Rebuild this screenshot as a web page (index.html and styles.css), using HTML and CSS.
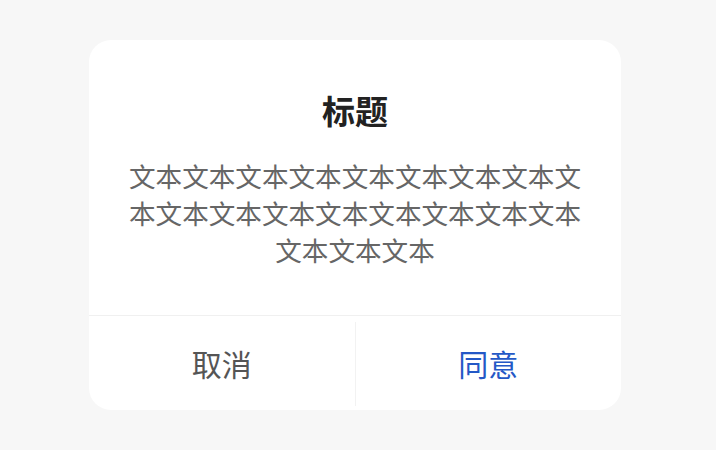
FILE: index.html
```html
<!DOCTYPE html>
<html lang="zh">
<head>
<meta charset="utf-8">
<link rel="stylesheet" href="styles.css">
</head>
<body>
<div class="dialog">
  <div class="content">
    <div class="title">标题</div>
    <div class="message">文本文本文本文本文本文本文本文本文本文本文本文本文本文本文本文本文本文本文本文本</div>
  </div>
  <div class="actions">
    <div class="btn cancel">取消</div>
    <div class="sep"></div>
    <div class="btn confirm">同意</div>
  </div>
</div>
</body>
</html>
```
FILE: styles.css
```css
html, body {
  margin: 0;
  padding: 0;
  background: #f7f7f7;
}
body {
  width: 716px;
  height: 450px;
  padding: 40px 0 0 89px;
  box-sizing: border-box;
  font-family: "Noto Sans CJK SC", "Noto Sans", sans-serif;
}
.dialog {
  width: 532px;
  height: 370px;
  background: #ffffff;
  border-radius: 22px;
  display: flex;
  flex-direction: column;
  overflow: hidden;
}
.content {
  padding: 46px 30px 0;
  height: 276px;
  box-sizing: border-box;
  display: flex;
  flex-direction: column;
  align-items: center;
  border-bottom: 1px solid #f0f0f0;
}
.title {
  font-size: 33px;
  line-height: 48px;
  font-weight: 700;
  color: #222222;
}
.message {
  margin-top: 23px;
  font-size: 26.6px;
  line-height: 37px;
  color: #666666;
  text-align: center;
}
.actions {
  flex: 1;
  display: flex;
  align-items: stretch;
  padding: 6px 0 4px;
}
.btn {
  flex: 1;
  display: flex;
  align-items: center;
  justify-content: center;
  font-size: 30px;
  padding-bottom: 2px;
}
.sep {
  width: 1px;
  background: #f2f2f2;
}
.cancel {
  color: #555555;
}
.confirm {
  color: #2458c6;
}
```
